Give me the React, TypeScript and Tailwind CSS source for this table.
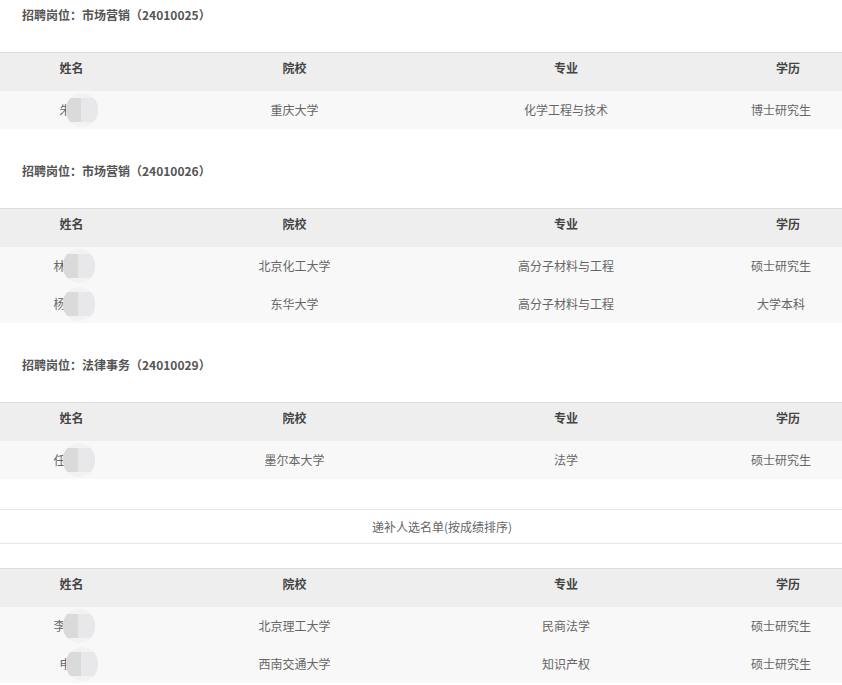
import React from "react";

type Row = { first: string; rest: string; school: string; major: string; degree: string; off: number };

const sections: { title: string; rows: Row[] }[] = [
  {
    title: "招聘岗位：市场营销（24010025）",
    rows: [{ first: "朱", rest: "某", school: "重庆大学", major: "化学工程与技术", degree: "博士研究生", off: 7 }],
  },
  {
    title: "招聘岗位：市场营销（24010026）",
    rows: [
      { first: "林", rest: "某某", school: "北京化工大学", major: "高分子材料与工程", degree: "硕士研究生", off: 10 },
      { first: "杨", rest: "某某", school: "东华大学", major: "高分子材料与工程", degree: "大学本科", off: 10 },
    ],
  },
  {
    title: "招聘岗位：法律事务（24010029）",
    rows: [{ first: "任", rest: "某某", school: "墨尔本大学", major: "法学", degree: "硕士研究生", off: 10 }],
  },
];

const extraRows: Row[] = [
  { first: "李", rest: "某某", school: "北京理工大学", major: "民商法学", degree: "硕士研究生", off: 10 },
  { first: "申", rest: "某", school: "西南交通大学", major: "知识产权", degree: "硕士研究生", off: 7 },
];

const grid = "grid grid-cols-[143px_303px_240px_1fr]";

function Table({ rows }: { rows: Row[] }) {
  return (
    <div>
      <div className={`${grid} h-[39px] border-t border-[#dddddd] bg-[#eeeeee] items-start pt-[6px] leading-[17px] text-[12px] font-bold text-[#444444]`}>
        <div className="text-center">姓名</div>
        <div className="text-center">院校</div>
        <div className="text-center">专业</div>
        <div className="text-center pl-[14px]">学历</div>
      </div>
      {rows.map((r, i) => (
        <div key={i} className={`${grid} h-[38px] bg-[#f8f8f8] items-center text-[12px] text-[#666666]`}>
          <div className="text-center">
            <span className="relative inline-block">
              {r.first}
              <span className="text-transparent">{r.rest}</span>
              <span
                className="absolute top-1/2 -translate-y-1/2 w-[32px] h-[34px] rounded-[16px] bg-[#f2f2f3] overflow-hidden flex items-center"
                style={{ left: r.off }}
              >
                <span className="w-[15px] h-[24px] bg-[#dadadb]" />
                <span className="w-[17px] h-[24px] bg-[#e8e8ea]" />
              </span>
            </span>
          </div>
          <div className="text-center">{r.school}</div>
          <div className="text-center">{r.major}</div>
          <div className="text-center">{r.degree}</div>
        </div>
      ))}
    </div>
  );
}

export default function App() {
  return (
    <div
      className="w-[842px] h-[685px] overflow-hidden bg-white"
      style={{ fontFamily: '"Noto Sans CJK SC", "Noto Sans", sans-serif' }}
    >
      <div className="w-[876px]">
        {sections.map((s, i) => (
          <div key={i} className={i === 0 ? "" : "mt-[27px]"}>
            <div className="h-[52px]">
              <div className="h-[30px] leading-[30px] pl-[22px] text-[12px] font-bold text-[#555555]">{s.title}</div>
            </div>
            <Table rows={s.rows} />
          </div>
        ))}
        <div className="mt-[30px] h-[35px] border-y border-[#e8e8e8] flex items-center justify-center pl-[8px] text-[12px] text-[#666666]">
          递补人选名单(按成绩排序)
        </div>
        <div className="mt-[24px]">
          <Table rows={extraRows} />
        </div>
      </div>
    </div>
  );
}
